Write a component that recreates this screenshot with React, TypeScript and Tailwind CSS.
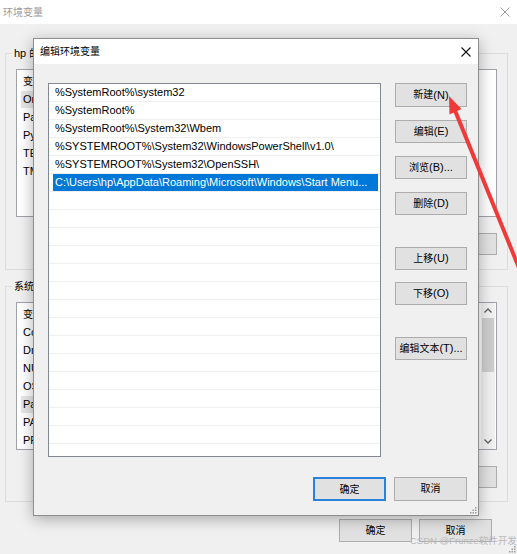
import React from "react";

function Z({ children }: { children: React.ReactNode }) {
  return <span className="text-[10px]">{children}</span>;
}

function Btn({ children, className = "" }: { children: React.ReactNode; className?: string }) {
  return (
    <div
      className={
        "flex items-center justify-center bg-[#e1e1e1] border border-[#adadad] whitespace-nowrap leading-none " +
        className
      }
    >
      {children}
    </div>
  );
}

function XIcon({ size, color, sw }: { size: number; color: string; sw: number }) {
  return (
    <svg width={size} height={size} viewBox="0 0 10 10">
      <path d="M0.5 0.5 L9.5 9.5 M9.5 0.5 L0.5 9.5" stroke={color} strokeWidth={sw} fill="none" />
    </svg>
  );
}

function Grip() {
  return (
    <svg width="7" height="7" viewBox="0 0 7 7">
      <rect x="5" y="0" width="1.5" height="1.5" fill="#9a9a9a" />
      <rect x="2.5" y="2.5" width="1.5" height="1.5" fill="#9a9a9a" />
      <rect x="5" y="2.5" width="1.5" height="1.5" fill="#9a9a9a" />
      <rect x="0" y="5" width="1.5" height="1.5" fill="#9a9a9a" />
      <rect x="2.5" y="5" width="1.5" height="1.5" fill="#9a9a9a" />
      <rect x="5" y="5" width="1.5" height="1.5" fill="#9a9a9a" />
    </svg>
  );
}

function BgList({
  rows,
  highlight,
  scroll,
}: {
  rows: string[];
  highlight: number;
  scroll?: boolean;
}) {
  return (
    <div className="h-[148px] bg-white border border-[#9fa3a8] flex">
      <div className="flex-1 pt-[2px] overflow-hidden">
        <div className="h-[18px] flex items-center pl-[6px]">
          <Z>变量</Z>
        </div>
        {rows.map((r, i) => (
          <div key={i} className="h-[18px] flex items-center">
            <div
              className={
                "ml-[4px] h-[17px] flex items-center pl-[2px] w-[120px] " +
                (i === highlight ? "bg-[#e6e6e6]" : "")
              }
            >
              {r}
            </div>
          </div>
        ))}
      </div>
      {scroll && (
        <div className="w-[14px] mr-[1px] bg-[#f0f0f0] flex flex-col items-center">
          <div className="h-[15px] flex items-center justify-center">
            <svg width="8" height="5" viewBox="0 0 8 5">
              <path d="M0.5 4.5 L4 1 L7.5 4.5" stroke="#606060" strokeWidth="1.3" fill="none" />
            </svg>
          </div>
          <div className="w-[12px] h-[54px] bg-[#cdcdcd]" />
          <div className="flex-1" />
          <div className="h-[15px] flex items-center justify-center">
            <svg width="8" height="5" viewBox="0 0 8 5">
              <path d="M0.5 0.5 L4 4 L7.5 0.5" stroke="#606060" strokeWidth="1.3" fill="none" />
            </svg>
          </div>
        </div>
      )}
    </div>
  );
}

const paths = [
  "%SystemRoot%\\system32",
  "%SystemRoot%",
  "%SystemRoot%\\System32\\Wbem",
  "%SYSTEMROOT%\\System32\\WindowsPowerShell\\v1.0\\",
  "%SYSTEMROOT%\\System32\\OpenSSH\\",
];

export default function App() {
  const empties = Array.from({ length: 15 });
  return (
    <div className="relative w-[517px] h-[554px] overflow-hidden bg-[#f0f0f0] text-[11px] text-black font-['Liberation_Sans','Noto_Sans_CJK_SC',sans-serif]">
      {/* background window */}
      <div className="h-[24px] bg-white flex items-center justify-between pl-[3px] pr-[7px]">
        <span className="text-[10px] text-[#9b9b9b]">环境变量</span>
        <XIcon size={10} color="#9b9b9b" sw={1} />
      </div>
      <div className="pl-[5px] pr-[9px] pt-[29px]">
        <div className="relative h-[217px] border border-[#dcdcdc] px-[10px] pt-[15px]">
          <span className="absolute -top-[8px] left-[6px] bg-[#f0f0f0] px-[2px] leading-[14px]">
            hp <Z>的用户变量</Z>(U)
          </span>
          <BgList rows={["OneDrive", "Path", "PyCharm", "TEMP", "TMP"]} highlight={0} />
          <div className="mt-[16px] flex justify-end gap-[7px]">
            <Btn className="w-[73px] h-[22px]">
              <Z>新建</Z>(N)...
            </Btn>
            <Btn className="w-[73px] h-[22px]">
              <Z>编辑</Z>(E)...
            </Btn>
            <Btn className="w-[73px] h-[22px]">
              <Z>删除</Z>(D)
            </Btn>
          </div>
        </div>
        <div className="relative mt-[16px] h-[216px] border border-[#dcdcdc] px-[10px] pt-[15px]">
          <span className="absolute -top-[8px] left-[6px] bg-[#f0f0f0] px-[2px] leading-[14px]">
            <Z>系统变量</Z>(S)
          </span>
          <BgList
            rows={[
              "ComSpec",
              "DriverData",
              "NUMBER_OF_PROCESSORS",
              "OS",
              "Path",
              "PATHEXT",
              "PROCESSOR_ARCHITECTURE",
            ]}
            highlight={4}
            scroll
          />
          <div className="mt-[16px] flex justify-end gap-[7px]">
            <Btn className="w-[73px] h-[22px]">
              <Z>新建</Z>(W)...
            </Btn>
            <Btn className="w-[73px] h-[22px]">
              <Z>编辑</Z>(I)...
            </Btn>
            <Btn className="w-[73px] h-[22px]">
              <Z>删除</Z>(L)
            </Btn>
          </div>
        </div>
        <div className="mt-[17px] pr-[16px] flex justify-end gap-[7px]">
          <Btn className="w-[73px] h-[23px]">
            <Z>确定</Z>
          </Btn>
          <Btn className="w-[73px] h-[23px]">
            <Z>取消</Z>
          </Btn>
        </div>
      </div>
      <div className="absolute right-[1px] bottom-[1px]">
        <Grip />
      </div>

      {/* foreground dialog */}
      <div className="absolute left-[33px] top-[38px] w-[446px] h-[478px] border border-[#8d8d8d] bg-[#f0f0f0] shadow-[0_3px_14px_rgba(0,0,0,0.3)] flex flex-col">
        <div className="h-[25px] bg-white flex items-center justify-between pl-[6px] pr-[7px]">
          <span className="text-[10px]">编辑环境变量</span>
          <XIcon size={10} color="#111" sw={1.1} />
        </div>
        <div className="flex pl-[14px] pt-[19px]">
          <div className="w-[333px] h-[374px] bg-white border border-[#828790] overflow-hidden">
            {paths.map((p, i) => (
              <div
                key={i}
                className="h-[18px] border-b border-[#efefef] flex items-center pl-[6px] whitespace-nowrap"
              >
                {p}
              </div>
            ))}
            <div className="h-[18px] border-b border-[#efefef] flex items-center">
              <div className="ml-[4px] mr-[2px] flex-1 h-[17px] bg-[#0078d7] text-white flex items-center pl-[2px] whitespace-nowrap overflow-hidden">
                C:\Users\hp\AppData\Roaming\Microsoft\Windows\Start Menu...
              </div>
            </div>
            {empties.map((_, i) => (
              <div key={i} className="h-[18px] border-b border-[#efefef]" />
            ))}
          </div>
          <div className="ml-[14px] w-[72px] flex flex-col">
            <Btn className="h-[24px]">
              <Z>新建</Z>(N)
            </Btn>
            <Btn className="h-[23px] mt-[13px]">
              <Z>编辑</Z>(E)
            </Btn>
            <Btn className="h-[23px] mt-[13px]">
              <Z>浏览</Z>(B)...
            </Btn>
            <Btn className="h-[23px] mt-[13px]">
              <Z>删除</Z>(D)
            </Btn>
            <Btn className="h-[23px] mt-[32px]">
              <Z>上移</Z>(U)
            </Btn>
            <Btn className="h-[23px] mt-[12px]">
              <Z>下移</Z>(O)
            </Btn>
            <Btn className="h-[23px] mt-[32px]">
              <Z>编辑文本</Z>(T)...
            </Btn>
          </div>
        </div>
        <div className="mt-[20px] pr-[11px] flex justify-end gap-[8px]">
          <div className="w-[73px] h-[24px] flex items-center justify-center bg-[#e1e1e1] border-2 border-[#2a82da]">
            <Z>确定</Z>
          </div>
          <Btn className="w-[73px] h-[24px]">
            <Z>取消</Z>
          </Btn>
        </div>
        <div className="absolute right-[1px] bottom-[1px]">
          <Grip />
        </div>
      </div>

      {/* watermark */}
      <div className="absolute left-[410px] top-[535px] text-[9.5px] leading-[12px] text-[#b9b9b9] whitespace-nowrap">
        CSDN @Frunze软件开发
      </div>

      {/* red arrow annotation */}
      <svg className="absolute inset-0 pointer-events-none" width="517" height="554" viewBox="0 0 517 554">
        <line x1="454" y1="108" x2="528" y2="290" stroke="#f03a3a" strokeWidth="4" />
        <polygon points="449,96 461.5,109 449.5,114.5" fill="#f03a3a" />
      </svg>
    </div>
  );
}
